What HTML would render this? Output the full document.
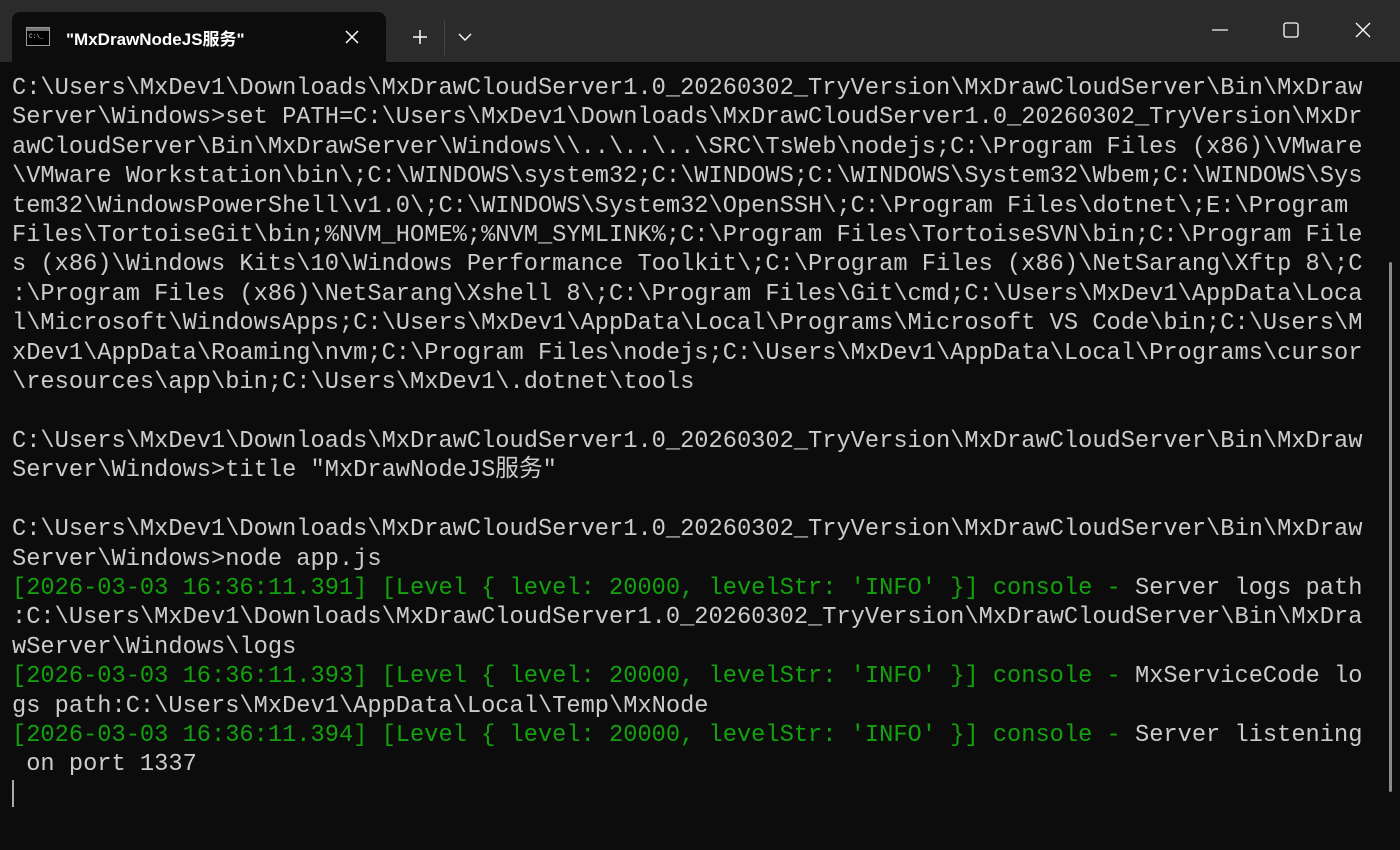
<!DOCTYPE html>
<html><head><meta charset="utf-8"><style>
html,body{margin:0;padding:0;width:1400px;height:850px;overflow:hidden;background:#0c0c0c}
.tb{position:absolute;left:0;top:0;width:1400px;height:62px;background:#2b2b2b}
.tab{position:absolute;left:12px;top:12px;width:374px;height:52px;background:#0c0c0c;border-radius:8px 8px 0 0}
.tabt{position:absolute;left:66px;top:25px;font:600 17px "Liberation Sans","Noto Sans CJK SC",sans-serif;color:#fff}
.term{position:absolute;left:12px;top:74px;font:23.7px/29.4px "Liberation Mono","Noto Sans CJK SC",monospace;color:#cccccc;white-space:pre}
.g{color:#13a10e}
.sb{position:absolute;left:1389px;top:262px;width:3px;height:530px;background:#8a8a8a;border-radius:2px}
.cur{position:absolute;left:12px;top:780px;width:2px;height:27px;background:#aaa}
</style></head><body>
<div class="tb"></div>
<div class="tab"></div>
<svg style="position:absolute;left:26px;top:27px" width="24" height="20" viewBox="0 0 24 20"><rect x="0.5" y="0.5" width="23" height="18" fill="#000" stroke="#999"/><rect x="1" y="1" width="22" height="3" fill="#777"/><text x="3" y="11" font-size="6" fill="#ddd" font-family="Liberation Mono">C:\_</text></svg>
<div class="tabt">"MxDrawNodeJS服务"</div>
<svg style="position:absolute;left:345px;top:30px" width="14" height="14"><path d="M1 1L13 13M13 1L1 13" stroke="#fff" stroke-width="1.5"/></svg>
<svg style="position:absolute;left:412px;top:29px" width="16" height="16"><path d="M8 1V15M1 8H15" stroke="#fff" stroke-width="1.5"/></svg>
<div style="position:absolute;left:444px;top:20px;width:1px;height:35px;background:#444"></div>
<svg style="position:absolute;left:458px;top:33px" width="14" height="8"><path d="M1 1L7 7L13 1" stroke="#fff" stroke-width="1.4" fill="none"/></svg>
<svg style="position:absolute;left:1212px;top:29px" width="16" height="2"><path d="M0 1H16" stroke="#fff" stroke-width="1.2"/></svg>
<svg style="position:absolute;left:1283px;top:22px" width="16" height="16"><rect x="1" y="1" width="14" height="14" rx="2" fill="none" stroke="#fff" stroke-width="1.3"/></svg>
<svg style="position:absolute;left:1355px;top:22px" width="16" height="16"><path d="M1 1L15 15M15 1L1 15" stroke="#fff" stroke-width="1.3"/></svg>
<div class="term">C:\Users\MxDev1\Downloads\MxDrawCloudServer1.0_20260302_TryVersion\MxDrawCloudServer\Bin\MxDraw
Server\Windows>set PATH=C:\Users\MxDev1\Downloads\MxDrawCloudServer1.0_20260302_TryVersion\MxDr
awCloudServer\Bin\MxDrawServer\Windows\\..\..\..\SRC\TsWeb\nodejs;C:\Program Files (x86)\VMware
\VMware Workstation\bin\;C:\WINDOWS\system32;C:\WINDOWS;C:\WINDOWS\System32\Wbem;C:\WINDOWS\Sys
tem32\WindowsPowerShell\v1.0\;C:\WINDOWS\System32\OpenSSH\;C:\Program Files\dotnet\;E:\Program
Files\TortoiseGit\bin;%NVM_HOME%;%NVM_SYMLINK%;C:\Program Files\TortoiseSVN\bin;C:\Program File
s (x86)\Windows Kits\10\Windows Performance Toolkit\;C:\Program Files (x86)\NetSarang\Xftp 8\;C
:\Program Files (x86)\NetSarang\Xshell 8\;C:\Program Files\Git\cmd;C:\Users\MxDev1\AppData\Loca
l\Microsoft\WindowsApps;C:\Users\MxDev1\AppData\Local\Programs\Microsoft VS Code\bin;C:\Users\M
xDev1\AppData\Roaming\nvm;C:\Program Files\nodejs;C:\Users\MxDev1\AppData\Local\Programs\cursor
\resources\app\bin;C:\Users\MxDev1\.dotnet\tools

C:\Users\MxDev1\Downloads\MxDrawCloudServer1.0_20260302_TryVersion\MxDrawCloudServer\Bin\MxDraw
Server\Windows>title "MxDrawNodeJS服务"

C:\Users\MxDev1\Downloads\MxDrawCloudServer1.0_20260302_TryVersion\MxDrawCloudServer\Bin\MxDraw
Server\Windows>node app.js
<span class="g">[2026-03-03 16:36:11.391] [Level { level: 20000, levelStr: 'INFO' }] console - </span>Server logs path
:C:\Users\MxDev1\Downloads\MxDrawCloudServer1.0_20260302_TryVersion\MxDrawCloudServer\Bin\MxDra
wServer\Windows\logs
<span class="g">[2026-03-03 16:36:11.393] [Level { level: 20000, levelStr: 'INFO' }] console - </span>MxServiceCode lo
gs path:C:\Users\MxDev1\AppData\Local\Temp\MxNode
<span class="g">[2026-03-03 16:36:11.394] [Level { level: 20000, levelStr: 'INFO' }] console - </span>Server listening
 on port 1337</div>
<div class="cur"></div>
<div class="sb"></div>
</body></html>
